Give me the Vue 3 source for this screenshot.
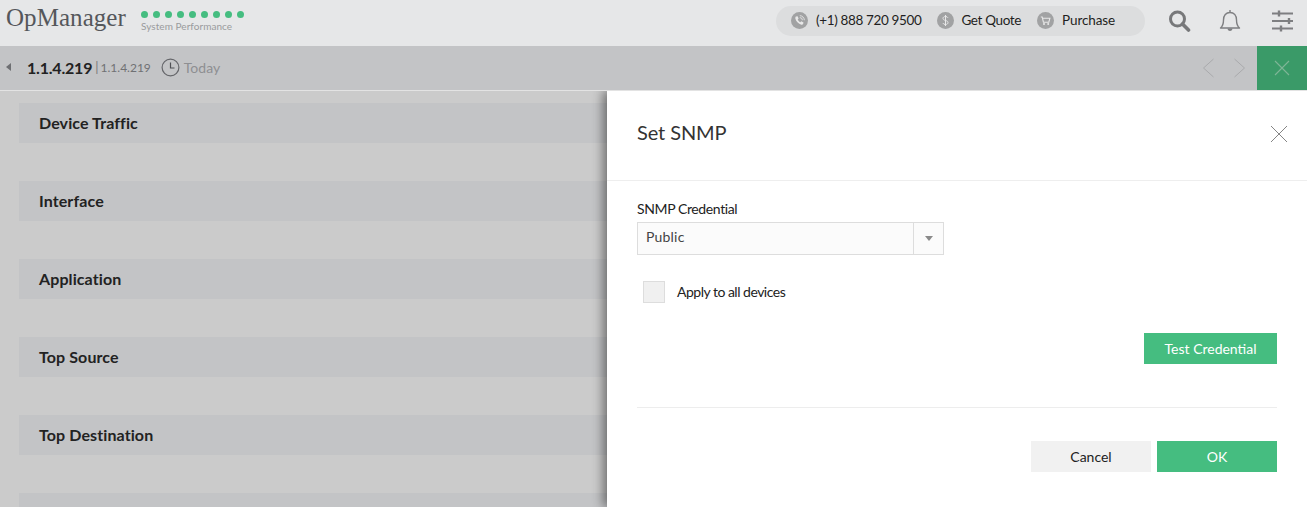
<script setup>
const sections = ['Device Traffic', 'Interface', 'Application', 'Top Source', 'Top Destination', '']
const dots = Array.from({ length: 9 })
</script>

<template>
  <div class="page">
    <header class="topbar">
      <div class="logo">OpManager</div>
      <div class="perf">
        <div class="dots"><i v-for="(d, i) in dots" :key="i" class="dot"></i></div>
        <div class="perf-label">System Performance</div>
      </div>
      <div class="spacer"></div>
      <div class="pill">
        <span class="pill-item first">
          <svg class="round" width="17" height="17" viewBox="0 0 17 17">
            <circle cx="8.5" cy="8.5" r="8.5" fill="#a1a2a3" />
            <path d="M5 4.6 L6.6 4.2 L7.6 6.5 L6.7 7.4 C7.2 8.6 8 9.5 9.3 10.2 L10.3 9.3 L12.5 10.4 L12.1 12 C11.8 12.8 10.8 13 9.8 12.6 C7.2 11.6 5.2 9.6 4.4 6.8 C4.2 5.8 4.4 5 5 4.6 Z" fill="#e8e8e8" />
            <path d="M8.8 5.6 A2.6 2.6 0 0 1 11.4 8.2 M8.8 3.7 A4.5 4.5 0 0 1 13.3 8.2" fill="none" stroke="#e8e8e8" stroke-width="0.9" />
          </svg>
          <span class="pill-text">(+1) 888 720 9500</span>
        </span>
        <span class="pill-item">
          <svg class="round" width="17" height="17" viewBox="0 0 17 17">
            <circle cx="8.5" cy="8.5" r="8.5" fill="#a1a2a3" />
            <path d="M11 5.8 C10.6 4.9 9.7 4.5 8.5 4.5 C7 4.5 6 5.2 6 6.4 C6 7.7 7.2 8.1 8.5 8.5 C9.9 8.9 11 9.3 11 10.6 C11 11.8 9.9 12.5 8.5 12.5 C7.2 12.5 6.3 12 5.9 11.1 M8.5 3 V14" fill="none" stroke="#e8e8e8" stroke-width="1" />
          </svg>
          <span class="pill-text">Get Quote</span>
        </span>
        <span class="pill-item">
          <svg class="round" width="17" height="17" viewBox="0 0 17 17">
            <circle cx="8.5" cy="8.5" r="8.5" fill="#a1a2a3" />
            <path d="M3.8 5 H5.2 L6.4 10.2 H11.8 L12.9 6.3 H5.6" fill="none" stroke="#e8e8e8" stroke-width="1.1" />
            <circle cx="7" cy="12" r="1" fill="#e8e8e8" />
            <circle cx="11.2" cy="12" r="1" fill="#e8e8e8" />
          </svg>
          <span class="pill-text buy">Purchase</span>
        </span>
      </div>
      <svg class="tool search" width="24" height="24" viewBox="0 0 24 24">
        <circle cx="10.5" cy="10" r="7" fill="none" stroke="#77787a" stroke-width="3" />
        <path d="M15.5 15 L21.5 21" stroke="#77787a" stroke-width="3.6" stroke-linecap="round" />
      </svg>
      <svg class="tool bell" width="24" height="24" viewBox="0 0 24 24">
        <path d="M2.5 19 C5 17 5.5 14.5 5.5 11 C5.5 6.5 8 3.5 12 3.5 C16 3.5 18.5 6.5 18.5 11 C18.5 14.5 19 17 21.5 19 Z" fill="none" stroke="#7e7f81" stroke-width="1.4" stroke-linejoin="round" />
        <path d="M12 1 V3.5" stroke="#7e7f81" stroke-width="1.4" />
        <path d="M9.5 19.6 H14.5 C14.2 21.4 13.2 22 12 22 C10.8 22 9.8 21.4 9.5 19.6 Z" fill="#7e7f81" />
      </svg>
      <svg class="tool sliders" width="22" height="22" viewBox="0 0 22 22">
        <path d="M0 3.5 H21 M0 11 H21 M0 18.5 H21" stroke="#7e7f81" stroke-width="2.2" />
        <path d="M7 0.5 V6.5 M17 8 V14 M9 15.5 V21.5" stroke="#7e7f81" stroke-width="2.4" />
      </svg>
    </header>

    <div class="subbar">
      <div class="crumbs">
        <span class="caret"></span>
        <span class="ip">1.1.4.219</span>
        <span class="sep">|</span>
        <span class="ip-sub">1.1.4.219</span>
        <svg class="clock" width="19" height="19" viewBox="0 0 19 19">
          <circle cx="9.5" cy="9.5" r="8.4" fill="none" stroke="#65666a" stroke-width="1.2" />
          <path d="M9.5 4.5 V10 H13.5" fill="none" stroke="#4f5054" stroke-width="1.2" />
        </svg>
        <span class="today">Today</span>
      </div>
      <div class="spacer"></div>
      <svg class="chev" width="12" height="20" viewBox="0 0 12 20"><path d="M11.5 1 L1.5 10 L11.5 19" fill="none" stroke="#a9aaac" stroke-width="1" /></svg>
      <svg class="chev next" width="12" height="20" viewBox="0 0 12 20"><path d="M0.5 1 L10.5 10 L0.5 19" fill="none" stroke="#a9aaac" stroke-width="1" /></svg>
      <div class="sub-close">
        <svg width="16" height="16" viewBox="0 0 16 16"><path d="M1 1 L15 15 M15 1 L1 15" stroke="#7fb597" stroke-width="1.1" /></svg>
      </div>
    </div>

    <main class="content">
      <div v-for="(s, i) in sections" :key="i" class="section">{{ s }}</div>
    </main>

    <aside class="drawer">
      <div class="drawer-head">
        <h2 class="title">Set SNMP</h2>
        <svg class="drawer-x" width="18" height="18" viewBox="0 0 18 18"><path d="M1 1 L17 17 M17 1 L1 17" stroke="#777" stroke-width="0.9" /></svg>
      </div>
      <div class="drawer-body">
        <label class="field-label">SNMP Credential</label>
        <div class="select">
          <span class="select-value">Public</span>
          <span class="select-arrow"><i></i></span>
        </div>
        <div class="check-row">
          <span class="checkbox"></span>
          <span class="check-label">Apply to all devices</span>
        </div>
        <div class="test-row">
          <button class="btn green test">Test Credential</button>
        </div>
      </div>
      <div class="drawer-foot">
        <button class="btn cancel">Cancel</button>
        <button class="btn green ok">OK</button>
      </div>
    </aside>
  </div>
</template>

<style>
html, body { margin: 0; background: #fff; }
</style>

<style scoped>
.page {
  position: relative;
  width: 1307px;
  height: 507px;
  overflow: hidden;
  font-family: Lato, "Liberation Sans", sans-serif;
  color: #222;
  background: #cbcbcb;
}
.spacer { flex: 1; }

.topbar {
  height: 46px;
  box-sizing: border-box;
  display: flex;
  align-items: center;
  background: #e6e7e8;
  padding-left: 6px;
}
.logo {
  font-family: "Liberation Serif", serif;
  font-size: 25px;
  letter-spacing: 0.05px;
  color: #55575b;
  width: 135px;
  margin-top: -11px;
}
.perf { margin-top: -3px; }
.dots { display: flex; gap: 5px; }
.dot { width: 7px; height: 7px; border-radius: 50%; background: #45bd80; }
.perf-label { font-size: 10px; line-height: 12px; letter-spacing: 0.05px; color: #9a9b9d; margin-top: 2px; }
.pill {
  width: 369px;
  height: 30px;
  box-sizing: border-box;
  margin-right: 22px;
  margin-top: -5px;
  padding-left: 15px;
  border-radius: 15px;
  background: #dcddde;
  display: flex;
  align-items: center;
  gap: 16px;
}
.pill-item { display: flex; align-items: center; gap: 7px; }
.pill-item.first { gap: 8px; }
.pill-text { font-size: 13.5px; letter-spacing: -0.36px; color: #1f1f22; margin-top: -1px; }
.pill-text.buy { letter-spacing: -0.1px; margin-left: 1px; }
.tool { flex: none; margin-top: -4px; }
.search { margin-right: 27px; }
.bell { margin-right: 30px; }
.sliders { margin-right: 13px; }

.subbar {
  height: 45px;
  box-sizing: border-box;
  border-bottom: 1px solid #e3e3e3;
  background: #c3c4c6;
  display: flex;
  align-items: center;
  padding-left: 6px;
}
.crumbs { display: flex; align-items: center; margin-top: -2px; }
.caret {
  width: 0; height: 0;
  border-style: solid;
  border-width: 4px 5px 4px 0;
  border-color: transparent #6e6f72 transparent transparent;
  margin-right: 16px;
}
.ip { font-size: 16px; font-weight: 700; letter-spacing: -0.2px; color: #222; }
.sep { font-size: 13px; color: #77787a; margin: 0 2px 0 3px; }
.ip-sub { font-size: 12px; color: #707174; }
.clock { margin-left: 10px; margin-right: 4px; }
.today { font-size: 14px; color: #8e8f92; }
.chev.next { margin-left: 20px; }
.sub-close {
  width: 50px;
  height: 44px;
  margin-left: 11px;
  background: #3a9a68;
  display: flex;
  align-items: center;
  justify-content: center;
}

.content {
  padding: 12px 0 0 19px;
  display: flex;
  flex-direction: column;
  gap: 38px;
}
.section {
  height: 40px;
  flex: none;
  background: #c3c4c6;
  padding-left: 20px;
  font-size: 16px;
  font-weight: 700;
  letter-spacing: 0.1px;
  line-height: 40px;
  color: #222;
}

.drawer {
  position: absolute;
  left: 607px;
  right: 0;
  top: 91px;
  bottom: 0;
  background: #fff;
  box-shadow: -4px 0 10px rgba(0, 0, 0, 0.45);
  clip-path: inset(0 0 0 -24px);
  display: flex;
  flex-direction: column;
}
.drawer-head {
  height: 90px;
  flex: none;
  box-sizing: border-box;
  border-bottom: 1px solid #eee;
  display: flex;
  align-items: center;
  justify-content: space-between;
  padding: 0 19px 7px 30px;
}
.title { margin: 0; font-size: 20px; font-weight: 400; letter-spacing: -0.1px; color: #333; }
.drawer-x { margin-top: 4px; }
.drawer-body {
  margin: 0 30px;
  height: 227px;
  flex: none;
  box-sizing: border-box;
  padding-top: 19px;
  border-bottom: 1px solid #ededed;
}
.field-label { display: block; font-size: 14px; line-height: 17px; letter-spacing: -0.38px; color: #222; }
.select {
  width: 307px;
  height: 33px;
  box-sizing: border-box;
  margin-top: 5px;
  border: 1px solid #ddd;
  background: #fbfbfb;
  display: flex;
  align-items: center;
}
.select-value { flex: 1; padding: 0 0 5px 8px; font-size: 14px; letter-spacing: 0.2px; color: #444; }
.select-arrow {
  width: 29px;
  height: 100%;
  border-left: 1px solid #ddd;
  display: flex;
  align-items: center;
  justify-content: center;
}
.select-arrow i {
  width: 0; height: 0;
  border-style: solid;
  border-width: 5px 4px 0 4px;
  border-color: #8a8a8a transparent transparent transparent;
}
.check-row { display: flex; align-items: center; margin: 26px 0 0 6px; }
.checkbox {
  width: 22px;
  height: 22px;
  box-sizing: border-box;
  border: 1px solid #ddd;
  background: #f0f0f0;
  margin-right: 12px;
}
.check-label { font-size: 14px; letter-spacing: -0.5px; color: #222; margin-top: -2px; }
.test-row { display: flex; justify-content: flex-end; margin-top: 30px; }
.btn {
  border: 0;
  height: 31px;
  padding: 0;
  font-family: Lato, "Liberation Sans", sans-serif;
  font-size: 14px;
  cursor: pointer;
}
.green { background: #45bd80; color: #fff; }
.test { width: 133px; }
.drawer-foot {
  margin: 33px 30px 0;
  display: flex;
  justify-content: flex-end;
  gap: 6px;
}
.cancel { width: 120px; background: #f1f1f1; color: #222; }
.ok { width: 120px; }
</style>
